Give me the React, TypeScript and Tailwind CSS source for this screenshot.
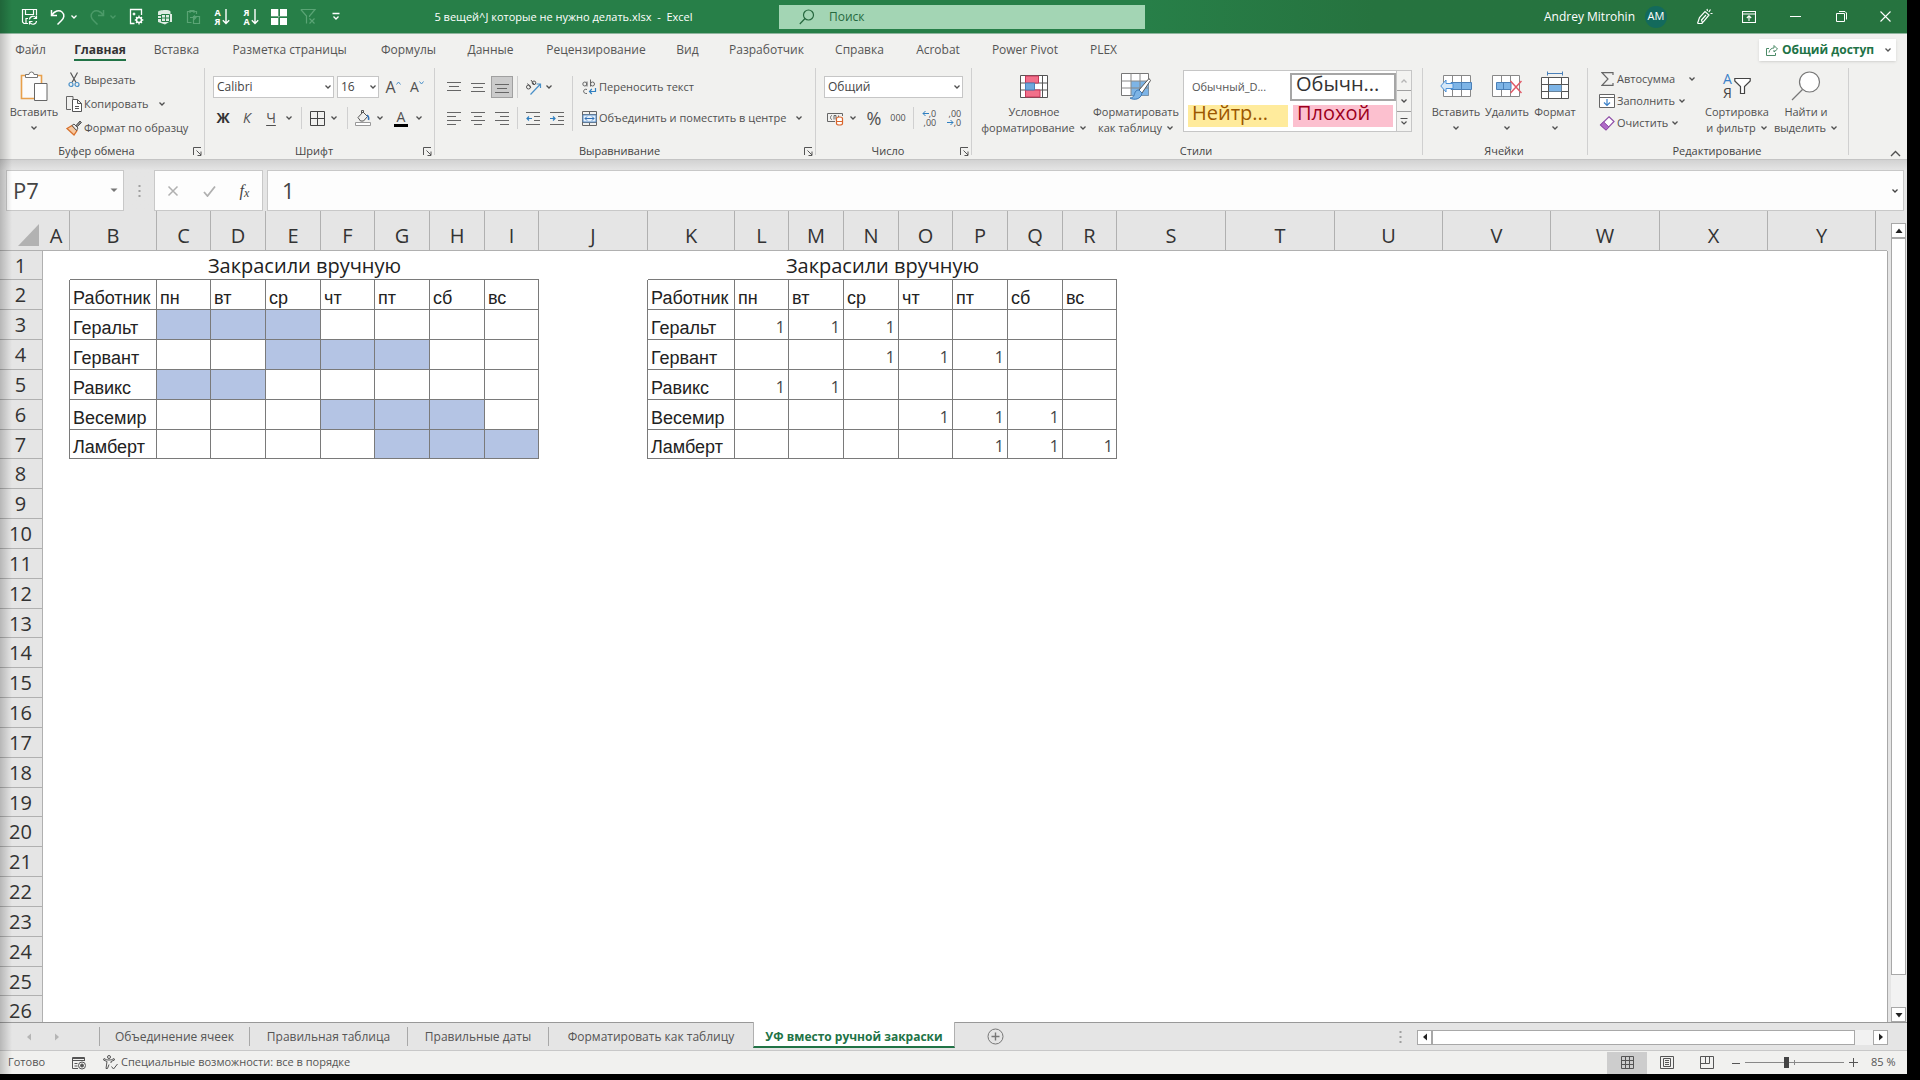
import React from 'react';

type Kids = { children?: React.ReactNode };

/* ---------- small drawing helpers ---------- */

function Svg({ w, h, children, vb, className = '' }: Kids & { w: number; h: number; vb?: string; className?: string }) {
  return (
    <svg
      width={w}
      height={h}
      viewBox={vb ?? `0 0 ${w} ${h}`}
      fill="none"
      stroke="currentColor"
      strokeWidth="1"
      className={`shrink-0 ${className}`}
      aria-hidden="true"
    >
      {children}
    </svg>
  );
}

function Chevron({ className = '' }: { className?: string }) {
  return (
    <Svg w={8} h={8} className={className}>
      <path d="M1.5 2.5 4 5l2.5-2.5" strokeWidth="1.3" />
    </Svg>
  );
}

function Launcher() {
  return (
    <button type="button" aria-label="Параметры группы" className="text-[#555]">
      <Svg w={9} h={9}>
        <path d="M.5 8V.5H8M3.5 3.5 8 8M8 4.5V8.500H4.500" />
      </Svg>
    </button>
  );
}

function Sep({ className = 'h-[22px]' }: { className?: string }) {
  return <div className={`w-px shrink-0 bg-[#d0d0d0] ${className}`} />;
}

function IconBtn({ label, className = 'w-6', children }: Kids & { label: string; className?: string }) {
  return (
    <button type="button" aria-label={label} className={`flex h-[22px] shrink-0 items-center justify-center ${className}`}>
      {children}
    </button>
  );
}

/* ---------- title bar ---------- */

function SaveIcon() {
  return (
    <Svg w={17} h={17}>
      <path d="M7 15.500H3L1.500 14V1.500H15.500V7M4.500 1.500V6.500H12.500V1.500M5 15.500V10.500H7" strokeWidth="1.2" />
      <path d="M8.500 11.500a3.500 3.500 0 0 1 6.500-1.500M15.500 7.500V10.500H12.500M15.500 13a3.500 3.500 0 0 1-6.500 1.500M8.500 16.500V13.500H11.500" strokeWidth="1.2" />
    </Svg>
  );
}

function UndoIcon({ flip = false }: { flip?: boolean }) {
  return (
    <Svg w={16} h={18} className={flip ? '-scale-x-100' : ''}>
      <path d="M1.500 2V7.500H7M1.800 7.200C4.500 3 9 1.500 12 4c3 2.600 2 6-.5 8.500L7.500 16.500" strokeWidth="1.5" />
    </Svg>
  );
}

function DocGearIcon() {
  return (
    <Svg w={15} h={17}>
      <path d="M5.500 15.500H1.500V1.500H12.500V7" strokeWidth="1.3" />
      <circle cx="5" cy="6" r="1" fill="currentColor" />
      <circle cx="10" cy="12" r="2.500" strokeWidth="1.5" />
      <path d="M10 7.500v1.800M10 14.700v1.800M5.800 12h1.700M12.500 12h1.800M7 9l1.200 1.200M11.800 13.800 13 15M13 9l-1.200 1.200M8.200 13.800 7 15" strokeWidth="1.3" />
    </Svg>
  );
}

function CubeTableIcon() {
  return (
    <Svg w={16} h={16}>
      <path d="M2 3C2 1 13 0 14.500 2.500V5H16v8h-3l-4 2.500L2 13z" fill="currentColor" fillOpacity=".85" stroke="none" />
      <path d="M5.500 5.500h8v7h-8zM5.500 9h8M9.500 5.500v7M2 6.500h3M2 9.500h3" stroke="#277f48" />
    </Svg>
  );
}

function ClipInsertIcon() {
  return (
    <Svg w={15} h={17}>
      <path d="M5.500 14.500H1.500V3.500H10.500V6M4 5V2.500H8V5" strokeWidth="1.200" />
      <path d="M7.500 8.500H13.500V15.500H7.500zM4 9.500h6M8 7.500l2 2-2 2" strokeWidth="1.200" />
    </Svg>
  );
}

function SortIcon({ top, bottom }: { top: string; bottom: string }) {
  return (
    <span className="flex items-center gap-px">
      <span className="flex flex-col text-[9px] leading-[9px] font-bold">
        <span>{top}</span>
        <span>{bottom}</span>
      </span>
      <Svg w={8} h={16}>
        <path d="M4 0V14.500M.800 11.300 4 14.500l3.200-3.200" strokeWidth="1.400" />
      </Svg>
    </span>
  );
}

function TitleBar() {
  return (
    <header className="grid h-[34px] shrink-0 grid-cols-[779fr_366fr_762fr] items-center border-b border-[#8fb59e] bg-[#277f48] text-[11px] text-white">
      <div className="flex items-center">
        <div className="flex w-[348px] shrink-0 items-center pl-[17px]">
          <IconBtn label="Сохранить"><SaveIcon /></IconBtn>
          <IconBtn label="Отменить" className="ml-[5px] w-6"><UndoIcon /></IconBtn>
          <IconBtn label="Список отмены" className="w-2"><Chevron /></IconBtn>
          <IconBtn label="Повторить" className="ml-[7px] w-6 text-[#4b9a68]"><UndoIcon flip /></IconBtn>
          <IconBtn label="Список повтора" className="w-2 text-[#4b9a68]"><Chevron /></IconBtn>
          <IconBtn label="Параметры документа" className="ml-[7px] w-6"><DocGearIcon /></IconBtn>
          <IconBtn label="Модель данных" className="ml-1 w-6"><CubeTableIcon /></IconBtn>
          <IconBtn label="Вставить значения" className="ml-[5px] w-6 text-[#5aa475]"><ClipInsertIcon /></IconBtn>
          <IconBtn label="Сортировка по возрастанию" className="ml-[5px] w-6"><SortIcon top="А" bottom="Я" /></IconBtn>
          <IconBtn label="Сортировка по убыванию" className="ml-[5px] w-6"><SortIcon top="Я" bottom="А" /></IconBtn>
          <IconBtn label="Все границы" className="ml-1 w-6">
            <Svg w={16} h={16}>
              <path d="M0 0h7v7H0zM9 0h7v7H9zM0 9h7v7H0zM9 9h7v7H9z" fill="currentColor" stroke="none" />
              <path d="M7.500 0v16M0 7.500h16" strokeOpacity=".3" />
            </Svg>
          </IconBtn>
          <IconBtn label="Снять фильтр" className="ml-[5px] w-6 text-[#5aa475]">
            <Svg w={17} h={17}>
              <path d="M.800 1.500H15L9.500 8v1M6.500 15.500V8L.800 1.500M9.500 10.500l5 5M14.500 10.500l-5 5" strokeWidth="1.200" />
            </Svg>
          </IconBtn>
          <IconBtn label="Настройка панели быстрого доступа" className="ml-1 w-6">
            <Svg w={8} h={9}>
              <path d="M.500 1.500h7M1.500 4.500 4 7l2.500-2.500" strokeWidth="1.300" />
            </Svg>
          </IconBtn>
        </div>
        <h1 className="flex-1 pt-px text-center whitespace-nowrap">5 вещей^J которые не нужно делать.xlsx&nbsp; -&nbsp; Excel</h1>
      </div>
      <label className="flex h-6 items-center bg-[#a3d5b4] pl-5 text-[#27693f]">
        <Svg w={16} h={16}>
          <circle cx="9.500" cy="6" r="5" strokeWidth="1.200" />
          <path d="M6 9.500.800 15" strokeWidth="1.200" />
        </Svg>
        <input
          type="search"
          aria-label="Поиск"
          placeholder="Поиск"
          className="ml-[14px] min-w-0 flex-1 bg-transparent text-xs outline-none placeholder:text-[#27693f]"
        />
      </label>
      <div className="flex h-full items-center justify-end bg-gradient-to-r from-[#277f48] to-[#26733f] to-30%">
        <span className="text-xs whitespace-nowrap">Andrey Mitrohin</span>
        <span className="ml-[10px] flex size-[22px] items-center justify-center rounded-full bg-[#136a5c]">AM</span>
        <IconBtn label="Скоро появится" className="ml-5 w-[34px]">
          <Svg w={17} h={17}>
            <path d="M1.500 15.500 3.500 9.500 9 3.500 13 7 7.500 13.500 6 15.500H1.500M6.500 15 5.500 12l4.500-5M11 1l.500 2M14.500 1.500 12.800 4M16.500 5.500h-2" strokeWidth="1.200" />
          </Svg>
        </IconBtn>
        <IconBtn label="Параметры отображения ленты" className="ml-[5px] w-[46px]">
          <Svg w={14} h={12}>
            <path d="M.500.500h13v11H.500zM.500 3h13M7 10V5M4.800 7 7 4.800 9.200 7" strokeWidth="1.100" />
          </Svg>
        </IconBtn>
        <IconBtn label="Свернуть" className="w-[46px]">
          <Svg w={11} h={3}><path d="M0 1.500h11" /></Svg>
        </IconBtn>
        <IconBtn label="Восстановить" className="w-[46px]">
          <Svg w={11} h={11}>
            <path d="M.500 2.500h8v8h-8zM3 .500h6L10.500 2v6.500" />
          </Svg>
        </IconBtn>
        <IconBtn label="Закрыть" className="w-[43px]">
          <Svg w={11} h={11}><path d="m.500.500 10 10M10.500.500l-10 10" strokeWidth="1.100" /></Svg>
        </IconBtn>
      </div>
    </header>
  );
}

/* ---------- ribbon tabs ---------- */

const tabs: [string, string][] = [
  ['Файл', 'w-[61px]'],
  ['Главная', 'w-[78px]'],
  ['Вставка', 'w-[75px]'],
  ['Разметка страницы', 'w-[151px]'],
  ['Формулы', 'w-[87px]'],
  ['Данные', 'w-[77px]'],
  ['Рецензирование', 'w-[134px]'],
  ['Вид', 'w-[49px]'],
  ['Разработчик', 'w-[109px]'],
  ['Справка', 'w-[77px]'],
  ['Acrobat', 'w-[80px]'],
  ['Power Pivot', 'w-[94px]'],
  ['PLEX', 'w-[63px]'],
];

function RibbonTabs() {
  return (
    <nav className="flex h-8 shrink-0 items-center text-xs text-[#555]">
      {tabs.map(([name, width]) => (
        <button key={name} type="button" className={`flex h-8 shrink-0 justify-center whitespace-nowrap ${width}`}>
          <span
            className={
              name === 'Главная'
                ? 'h-[27px] border-b-2 border-[#217346] leading-8 font-bold text-[#333]'
                : 'leading-8'
            }
          >
            {name}
          </span>
        </button>
      ))}
      <button
        type="button"
        className="mr-[11px] ml-auto flex h-[22px] w-[137px] items-center bg-white pl-[7px] font-bold text-[#217346] shadow-sm"
      >
        <Svg w={12} h={12} className="text-[#4b8a67]">
          <path d="M3 4.500H.500v7h9V9M3 8.500C3.500 5.500 5.500 4 8 4V1.500L11.500 5 8 8V6" />
        </Svg>
        <span className="ml-1 flex-1 text-left text-xs whitespace-nowrap">Общий доступ</span>
        <Chevron className="mr-1 text-[#555]" />
      </button>
    </nav>
  );
}

/* ---------- ribbon groups ---------- */

function Group({ title, width, launcher = false, children }: Kids & { title: string; width: string; launcher?: boolean }) {
  return (
    <>
      <section aria-label={title} className={`flex shrink-0 flex-col ${width}`}>
        <div className="flex h-[76px]">{children}</div>
        <div className="flex h-[14px] items-center pr-[2px] leading-[14px] text-[#444]">
          <span className="flex-1 text-center">{title}</span>
          {launcher && <Launcher />}
        </div>
      </section>
      <Sep className="h-[87px] bg-[#bdbdbd]" />
    </>
  );
}

function Combo({ label, value, className }: { label: string; value: string; className: string }) {
  return (
    <div className={`flex h-[22px] items-center border border-[#c6c6c6] bg-white pr-px ${className}`}>
      <select aria-label={label} defaultValue={value} className="min-w-0 flex-1 appearance-none bg-transparent pl-[3px] text-xs text-[#444] outline-none">
        <option>{value}</option>
      </select>
      <Chevron className="pointer-events-none" />
    </div>
  );
}

function BigBtn({ icon, lines, width, chevron }: { icon: React.ReactNode; lines: string[]; width: string; chevron: 'inline' | 'below' }) {
  return (
    <button type="button" className={`flex shrink-0 flex-col items-center pt-[2px] whitespace-nowrap ${width}`}>
      <span className="mb-[2px] flex h-8 items-center justify-center">{icon}</span>
      {lines.map((line, i) => (
        <span key={line} className="flex h-4 items-center gap-1 leading-4">
          {line}
          {chevron === 'inline' && i === lines.length - 1 && <Chevron />}
        </span>
      ))}
      {chevron === 'below' && <Chevron className="mt-1" />}
    </button>
  );
}

function RowBtn({ icon, text, className, iconBox = 'w-5', chevron }: { icon: React.ReactNode; text: string; className: string; iconBox?: string; chevron?: string }) {
  return (
    <button type="button" className={`flex items-center whitespace-nowrap ${className}`}>
      <span className={`flex shrink-0 items-center justify-center ${iconBox}`}>{icon}</span>
      {text}
      {chevron && <Chevron className={chevron} />}
    </button>
  );
}

function Lines({ d }: { d: string }) {
  return (
    <Svg w={14} h={14} className="text-[#666]">
      <path d={d} />
    </Svg>
  );
}

function ClipboardGroup() {
  return (
    <Group title="Буфер обмена" width="w-[204px]" launcher>
      <div className="flex pl-1">
        <BigBtn
          width="w-[60px]"
          lines={['Вставить']}
          chevron="below"
          icon={
            <Svg w={28} h={30}>
              <path d="M1.500 4.500h20v23h-20z" stroke="#e8a04c" strokeWidth="1.600" fill="#fbfbfb" />
              <path d="M5.500 6.500v-3H9a2.500 2.500 0 0 1 5 0h3.500v3z" fill="#fff" stroke="#777" />
              <path d="M14.500 12.500h12.500v17H14.500z" fill="#fff" stroke="#666" />
            </Svg>
          }
        />
        <div className="flex flex-col items-start">
          <RowBtn
            className="h-6"
            text="Вырезать"
            icon={
              <Svg w={12} h={16}>
                <path d="M2.500.500 8 10.500M9.500.500 4 10.500" stroke="#555" strokeWidth="1.200" />
                <circle cx="3" cy="12.500" r="2" stroke="#4a90c8" strokeWidth="1.200" />
                <circle cx="9" cy="12.500" r="2" stroke="#4a90c8" strokeWidth="1.200" />
              </Svg>
            }
          />
          <RowBtn
            className="h-6"
            text="Копировать"
            chevron="ml-[9px]"
            icon={
              <Svg w={16} h={16}>
                <path d="M5 13.500H.500V.500h6.500V3" stroke="#666" />
                <path d="M6.500 3.500h5l4 4v8h-9zM11.500 3.500v4h4M9 10.500h4M9 12.500h4" stroke="#555" fill="#fff" />
              </Svg>
            }
          />
          <RowBtn
            className="h-6"
            text="Формат по образцу"
            icon={
              <Svg w={16} h={16}>
                <path d="M1 8.500 6 5.500l5 5L8 15z" fill="#f6c9a0" stroke="#d9712c" strokeWidth="1.300" />
                <path d="m6 5.500 2-1.500 4 4-1.500 2.500z" fill="#eee" stroke="#555" />
                <path d="m10 5.500 4-4.500 1.500 1.500-4 4z" fill="#888" stroke="#555" />
              </Svg>
            }
          />
        </div>
      </div>
    </Group>
  );
}

function FontGroup() {
  return (
    <Group title="Шрифт" width="w-[229px]" launcher>
      <div className="flex flex-col pt-2">
        <div className="flex pl-2">
          <Combo label="Шрифт" value="Calibri" className="w-[121px]" />
          <Combo label="Размер шрифта" value="16" className="ml-[3px] w-[42px]" />
          <IconBtn label="Увеличить размер шрифта" className="ml-[2px] w-6">
            <span className="text-base">A</span>
            <Svg w={5} h={4} className="mb-2 text-[#4a90c8]"><path d="M.500 3.500 2.500 1l2 2.500" /></Svg>
          </IconBtn>
          <IconBtn label="Уменьшить размер шрифта">
            <span className="text-sm">A</span>
            <Svg w={5} h={4} className="mb-2 text-[#4a90c8]"><path d="M.500.500 2.500 3l2-2.500" /></Svg>
          </IconBtn>
        </div>
        <div className="mt-[9px] flex pl-[6px]">
          <IconBtn label="Полужирный"><span className="text-sm font-bold text-[#333]">Ж</span></IconBtn>
          <IconBtn label="Курсив"><span className="text-sm italic">К</span></IconBtn>
          <IconBtn label="Подчёркнутый"><span className="text-sm underline underline-offset-2">Ч</span></IconBtn>
          <IconBtn label="Вид подчёркивания" className="w-3"><Chevron /></IconBtn>
          <Sep className="ml-[6px] h-[22px]" />
          <IconBtn label="Границы" className="ml-[3px] w-6">
            <Svg w={15} h={15} className="text-[#444]"><path d="M.500.500h14v14h-14zM7.500.500v14M.500 7.500h14" /></Svg>
          </IconBtn>
          <IconBtn label="Виды границ" className="w-[10px]"><Chevron /></IconBtn>
          <Sep className="ml-2 h-[22px]" />
          <IconBtn label="Цвет заливки" className="ml-[3px] w-6">
            <Svg w={16} h={16}>
              <path d="M3 7.500 8 2l4.500 4.500-4 4.500H5.500zM6.500 3.500V.500h2V2" stroke="#555" />
              <path d="M12 5c1.500 1 2 3 1.500 5" stroke="#2f6fb5" strokeWidth="1.500" />
              <path d="M.500 12.500h15v3H.500z" stroke="#999" fill="#fff" />
            </Svg>
          </IconBtn>
          <IconBtn label="Выбор заливки" className="w-[10px]"><Chevron /></IconBtn>
          <IconBtn label="Цвет шрифта" className="ml-1 w-6">
            <span className="border-b-[3px] border-black px-[3px] text-sm leading-[14px]">A</span>
          </IconBtn>
          <IconBtn label="Выбор цвета шрифта" className="w-3"><Chevron /></IconBtn>
        </div>
      </div>
    </Group>
  );
}

function AlignGroup() {
  return (
    <Group title="Выравнивание" width="w-[380px]" launcher>
      <div className="flex w-[137px] shrink-0 flex-col pt-2 pl-[7px]">
        <div className="flex">
          <IconBtn label="По верхнему краю"><Lines d="M0 2.500h14M2 6.500h10M0 10.500h14" /></IconBtn>
          <IconBtn label="По середине"><Lines d="M0 3.500h14M2 7.500h10M0 11.500h14" /></IconBtn>
          <button type="button" aria-label="По нижнему краю" aria-pressed="true" className="mx-px flex h-[22px] w-[22px] items-center justify-center border border-[#a0a0a0] bg-[#cbcbcb]">
            <Lines d="M0 4.500h14M2 8.500h10M0 12.500h14" />
          </button>
          <Sep className="ml-[3px] h-[22px]" />
          <IconBtn label="Ориентация" className="ml-[3px] w-6">
            <Svg w={17} h={17}>
              <circle cx="3.500" cy="8" r="2" stroke="#555" />
              <path d="M2.500 4.500 6 9M6 1l3.500 5" stroke="#555" />
              <circle cx="9" cy="3.800" r="1.800" stroke="#555" />
              <path d="M5.500 15.500 15 5.500M15.500 9V5H11.500" stroke="#4a90c8" strokeWidth="1.200" />
            </Svg>
          </IconBtn>
          <IconBtn label="Виды ориентации" className="w-2"><Chevron /></IconBtn>
        </div>
        <div className="mt-[9px] flex">
          <IconBtn label="По левому краю"><Lines d="M0 1.500h14M0 5.500h9M0 9.500h14M0 13.500h9" /></IconBtn>
          <IconBtn label="По центру"><Lines d="M0 1.500h14M3 5.500h8M0 9.500h14M3 13.500h8" /></IconBtn>
          <IconBtn label="По правому краю"><Lines d="M0 1.500h14M5 5.500h9M0 9.500h14M5 13.500h9" /></IconBtn>
          <Sep className="ml-[3px] h-[22px]" />
          <IconBtn label="Уменьшить отступ" className="ml-[3px] w-6">
            <Svg w={14} h={14}>
              <path d="M0 1.500h14M8 5.500h6M8 9.500h6M0 13.500h14" stroke="#666" />
              <path d="M6 7.500H1M3 5.500l-2 2 2 2" stroke="#2f7fc0" strokeWidth="1.200" />
            </Svg>
          </IconBtn>
          <IconBtn label="Увеличить отступ">
            <Svg w={14} h={14}>
              <path d="M0 1.500h14M8 5.500h6M8 9.500h6M0 13.500h14" stroke="#666" />
              <path d="M0 7.500h5M3 5.500l2 2-2 2" stroke="#2f7fc0" strokeWidth="1.200" />
            </Svg>
          </IconBtn>
        </div>
      </div>
      <Sep className="mt-2 h-[55px]" />
      <div className="flex flex-col items-start pt-2 pl-[6px]">
        <RowBtn
          className="h-[22px]"
          text="Переносить текст"
          icon={
            <Svg w={15} h={16}>
              <circle cx="2.800" cy="5" r="2" stroke="#666" />
              <path d="M5 2.500V7.500M8.500.500V7.500" stroke="#666" />
              <circle cx="10.500" cy="5" r="2" stroke="#666" />
              <path d="M5 10.500c-4-1.500-5 4.500 0 4" stroke="#666" />
              <path d="M13.500 9v3.500H7.500M9.800 10l-2.300 2.500L9.800 15" stroke="#2f7fc0" strokeWidth="1.200" />
            </Svg>
          }
        />
        <RowBtn
          className="mt-[9px] h-[22px]"
          text="Объединить и поместить в центре"
          chevron="ml-[9px]"
          icon={
            <Svg w={15} h={15}>
              <path d="M.500.500h14v14h-14z" stroke="#666" />
              <path d="M.500 3.500h14M.500 11.500h14M7.500.500v3M7.500 11.500v3" stroke="#666" />
              <path d="M1 4h13v7H1z" fill="#e2eefa" stroke="#5a8fc8" />
              <path d="M3 7.500h9M5 5.500l-2 2 2 2M10 5.500l2 2-2 2" stroke="#2f6fb5" />
            </Svg>
          }
        />
      </div>
    </Group>
  );
}

function Decimals({ top, bottom, arrow }: { top: string; bottom: string; arrow: 'up' | 'down' }) {
  const mark = (
    <Svg w={7} h={7} className="text-[#2f7fc0]">
      <path d={arrow === 'up' ? 'M7 3.500H1M3.500 1 1 3.500 3.500 6' : 'M0 3.500h6M3.500 1 6 3.500 3.500 6'} />
    </Svg>
  );
  return (
    <span className="flex flex-col items-end text-[9px] leading-[9px]">
      <span className="flex items-center">{arrow === 'up' && mark}{top}</span>
      <span className="flex items-center">{arrow === 'down' && mark}{bottom}</span>
    </span>
  );
}

function NumberGroup() {
  return (
    <Group title="Число" width="w-[155px]" launcher>
      <div className="flex flex-col pt-2">
        <div className="flex pl-2">
          <Combo label="Числовой формат" value="Общий" className="w-[139px]" />
        </div>
        <div className="mt-[9px] flex pl-[7px]">
          <IconBtn label="Финансовый формат">
            <Svg w={17} h={15}>
              <path d="M8 10.500H.500v-8h15V5" stroke="#666" />
              <path d="M5 4.500C3 4.500 3 8.500 5 8.500M7 8.500v-4h2v4M11.500 4.500v2" stroke="#666" />
              <path d="M9.500 7.500c0-2 6-2 6 0v5c0 2-6 2-6 0zM9.500 10.500h6" fill="#fff" stroke="#d9652c" strokeWidth="1.200" />
            </Svg>
          </IconBtn>
          <IconBtn label="Виды финансового формата" className="w-3"><Chevron /></IconBtn>
          <IconBtn label="Процентный формат" className="w-[30px]"><span className="text-lg">%</span></IconBtn>
          <IconBtn label="Формат с разделителями" className="w-[18px]"><span className="text-[9px]">000</span></IconBtn>
          <Sep className="ml-[6px] h-[22px]" />
          <IconBtn label="Увеличить разрядность" className="ml-[3px] w-6"><Decimals top=",0" bottom=",00" arrow="up" /></IconBtn>
          <IconBtn label="Уменьшить разрядность" className="ml-px w-6"><Decimals top=",00" bottom=",0" arrow="down" /></IconBtn>
        </div>
      </div>
    </Group>
  );
}

function StylesGroup() {
  return (
    <Group title="Стили" width="w-[450px]">
      <div className="flex pl-[7px]">
        <BigBtn
          width="w-[110px]"
          lines={['Условное', 'форматирование']}
          chevron="inline"
          icon={
            <Svg w={28} h={23}>
              <path d="M.500.500h27v22H.500zM.500 8h27M.500 15h27M5.500.500v22M22.500.500v22M14 .500v22" fill="#fff" stroke="#555" />
              <path d="M5.500 1h13v7h-13zM5.500 15h14.500v7H5.500z" fill="#f2708a" stroke="#c8385a" />
              <path d="M5.500 8h9v7h-9z" fill="#6fa8dc" stroke="#4a80b8" />
            </Svg>
          }
        />
        <BigBtn
          width="w-[94px]"
          lines={['Форматировать', 'как таблицу']}
          chevron="inline"
          icon={
            <Svg w={30} h={28}>
              <path d="M.500 1.500h27v22H.500z" fill="#fff" stroke="#777" />
              <path d="M10 9h17.500v14.500H10z" fill="#7db4e6" stroke="none" />
              <path d="M.500 9h27M.500 16h27M10 1.500v22M19 1.500v22" stroke="#888" />
              <path d="M28 6.500 18 18l3 3 8.500-12.500z" fill="#fff" stroke="#555" />
              <path d="M18 18c-4 0-4 3-5 5.500-1 2-2.500 2.500-4 2.500 4 2.500 11 1.500 12-5z" fill="#7db4e6" stroke="#3a78b8" />
            </Svg>
          }
        />
        <div className="mt-[2px] flex h-[62px] w-[229px] border border-[#c6c6c6] bg-white">
          <div className="grid flex-1 grid-cols-[1fr_106px] grid-rows-[28px_28px] gap-x-[2px] pt-[2px] pl-1 text-xl leading-4 whitespace-nowrap">
            <button type="button" className="pl-1 text-left text-[11px] text-[#555]">Обычный_D...</button>
            <button type="button" className="border-2 border-[#a6a6a6] pb-[6px] pl-1 text-left text-[#333]">Обычн...</button>
            <button type="button" className="mt-1 mb-[2px] bg-[#ffeb9c] pb-[8px] pl-1 text-left text-[#9c5700]">Нейтр...</button>
            <button type="button" className="mx-[3px] mt-1 mb-[2px] bg-[#fcc0cf] pb-[8px] pl-1 text-left text-[#9c0020]">Плохой</button>
          </div>
          <div className="flex w-[15px] flex-col border-l border-[#c6c6c6] bg-[#f3f3f1]">
            <button type="button" aria-label="Прокрутить вверх" className="flex flex-1 items-center justify-center text-[#b5b5b5]"><Chevron className="rotate-180" /></button>
            <button type="button" aria-label="Прокрутить вниз" className="flex flex-1 items-center justify-center border-y border-[#a0a0a0]"><Chevron /></button>
            <button type="button" aria-label="Все стили" className="flex flex-1 items-center justify-center">
              <Svg w={8} h={9}><path d="M.500 1.500h7M1.500 4.500 4 7l2.500-2.500" strokeWidth="1.200" /></Svg>
            </button>
          </div>
        </div>
      </div>
    </Group>
  );
}

function CellsGroup() {
  return (
    <Group title="Ячейки" width="w-[164px]">
      <div className="flex pl-[7px]">
        <BigBtn
          width="w-[52px]"
          lines={['Вставить']}
          chevron="below"
          icon={
            <Svg w={32} h={24}>
              <path d="M3.500 1.500h27v21h-27zM12.500 1.500v21M21.500 1.500v21" fill="#fff" stroke="#888" />
              <path d="M11 8.500h20.500v7H11zM21.500 8.500v7" fill="#7db4e6" stroke="#4a80b8" />
              <path d="M13 9.500H6V6L.800 12 6 18v-3.500h7z" fill="#d6e8f8" stroke="#4a90d8" />
            </Svg>
          }
        />
        <BigBtn
          width="w-[50px]"
          lines={['Удалить']}
          chevron="below"
          icon={
            <Svg w={30} h={24}>
              <path d="M.500 1.500h27v21H.500zM9.500 1.500v21M18.500 1.500v21" fill="#fff" stroke="#888" />
              <path d="M4.500 8.500H19v7H4.500zM11.500 8.500v7" fill="#7db4e6" stroke="#4a80b8" />
              <path d="m18.500 7 11 12M29.500 7l-11 12" stroke="#e05a68" strokeWidth="1.500" />
            </Svg>
          }
        />
        <BigBtn
          width="w-[46px]"
          lines={['Формат']}
          chevron="below"
          icon={
            <Svg w={28} h={30}>
              <path d="M6.500 2.500h15M6.500.500v4M21.500.500v4" stroke="#4a80b8" />
              <path d="M.500 6.500h27v21H.500zM.500 13.500h27M.500 20.500h27M7.500 6.500v21M20.500 6.500v21" fill="#fff" stroke="#555" />
              <path d="M8 14h12.500v6.500H8z" fill="#7db4e6" stroke="none" />
            </Svg>
          }
        />
      </div>
    </Group>
  );
}

function EditGroup() {
  return (
    <Group title="Редактирование" width="w-[260px]">
      <div className="flex w-[112px] shrink-0 flex-col items-start pl-[9px]">
        <RowBtn
          className="h-[22px]"
          text="Автосумма"
          chevron="ml-[13px]"
          icon={<Svg w={13} h={14}><path d="M12 3V.700H1L7 7l-6 6.300h11V11" stroke="#666" strokeWidth="1.200" /></Svg>}
        />
        <RowBtn
          className="h-[22px]"
          text="Заполнить"
          chevron="ml-[3px]"
          icon={
            <Svg w={16} h={14}>
              <path d="M.500.500h15v13H.500zM.500 3.500h15" fill="#fff" stroke="#666" />
              <path d="M8 5v6.500M5 8.500l3 3 3-3" stroke="#3a80c8" strokeWidth="1.200" />
            </Svg>
          }
        />
        <RowBtn
          className="h-[22px]"
          text="Очистить"
          chevron="ml-[3px]"
          icon={
            <Svg w={16} h={15}>
              <path d="M10 .800 15 5.500 7 14 1.500 9z" fill="#fff" stroke="#9050a8" strokeWidth="1.200" />
              <path d="M4.500 5.800 10 11l-3 3L1.500 9z" fill="#b06ac8" stroke="#9050a8" />
            </Svg>
          }
        />
      </div>
      <BigBtn
        width="w-[74px]"
        lines={['Сортировка', 'и фильтр']}
        chevron="inline"
        icon={
          <span className="flex items-center gap-[2px]">
            <span className="flex flex-col text-sm leading-[14px]">
              <span className="text-[#3a80c8]">А</span>
              <span className="text-[#444]">Я</span>
            </span>
            <Svg w={17} h={18}><path d="M.800 1.500h15.400v2.500L10.500 9.500v7h-4v-7L.800 4z" fill="#fff" stroke="#444" strokeWidth="1.200" /></Svg>
          </span>
        }
      />
      <BigBtn
        width="w-[64px]"
        lines={['Найти и', 'выделить']}
        chevron="inline"
        icon={
          <Svg w={30} h={30}>
            <circle cx="18.500" cy="11" r="10" fill="#fff" stroke="#777" strokeWidth="1.200" />
            <path d="M11.500 18.500 1 29" stroke="#777" strokeWidth="1.300" />
          </Svg>
        }
      />
    </Group>
  );
}

function Ribbon() {
  return (
    <div className="flex h-[94px] shrink-0 border-b border-[#c4c4c4] pt-[2px] text-[11px] text-[#505050]">
      <ClipboardGroup />
      <FontGroup />
      <AlignGroup />
      <NumberGroup />
      <StylesGroup />
      <CellsGroup />
      <EditGroup />
      <button type="button" aria-label="Свернуть ленту" className="mr-[6px] mb-[2px] ml-auto self-end">
        <Svg w={11} h={7}><path d="m1 6 4.500-4.500L10 6" strokeWidth="1.400" /></Svg>
      </button>
    </div>
  );
}

/* ---------- formula bar ---------- */

function Dots() {
  return (
    <Svg w={3} h={12} className="text-[#a0a0a0]">
      <path d="M.500 0h2v2h-2zM.500 5h2v2h-2zM.500 10h2v2h-2z" fill="currentColor" stroke="none" />
    </Svg>
  );
}

function FormulaBar() {
  return (
    <div className="flex h-[51px] shrink-0 items-start bg-gradient-to-b from-[#d2d2d2] to-[#e5e5e5] to-20% pt-[10px] pr-[3px] pl-[6px] text-[22px] text-[#444]">
      <div className="flex h-[41px] w-[118px] shrink-0 items-center border border-[#c8c8c8] bg-[#fdfdfd] pr-[5px]">
        <input aria-label="Имя ячейки" defaultValue="P7" className="min-w-0 flex-1 bg-transparent pl-[6px] outline-none" />
        <Svg w={8} h={5}><path d="M.500.500h7L4 4z" fill="#777" stroke="none" /></Svg>
      </div>
      <div className="flex h-[41px] w-[30px] shrink-0 items-center justify-center"><Dots /></div>
      <div className="flex h-[41px] w-[109px] shrink-0 items-center border border-[#c8c8c8] bg-[#fdfdfd]">
        <IconBtn label="Отмена" className="w-[36px] text-[#b0b0b0]">
          <Svg w={12} h={12}><path d="m1.500 1.500 9 9M10.500 1.500l-9 9" strokeWidth="1.500" /></Svg>
        </IconBtn>
        <IconBtn label="Ввод" className="w-[36px] text-[#b0b0b0]">
          <Svg w={13} h={12}><path d="m1 7 3.500 4L12 1.500" strokeWidth="1.800" /></Svg>
        </IconBtn>
        <IconBtn label="Вставить функцию" className="w-[35px]">
          <span className="font-['Liberation_Serif',serif] text-base leading-4 italic">f</span>
          <span className="mt-1 font-['Liberation_Serif',serif] text-xs leading-3 italic">x</span>
        </IconBtn>
      </div>
      <div className="ml-1 flex h-[41px] flex-1 items-center border border-[#c8c8c8] bg-[#fdfdfd] pr-1">
        <input aria-label="Строка формул" defaultValue="1" className="min-w-0 flex-1 bg-transparent pl-[14px] outline-none" />
        <Chevron />
      </div>
    </div>
  );
}

/* ---------- worksheet ---------- */

const columns: [string, string][] = [
  ['A', 'w-[27px]'], ['B', 'w-[87px]'], ['C', 'w-[54px]'], ['D', 'w-[55px]'], ['E', 'w-[55px]'],
  ['F', 'w-[54px]'], ['G', 'w-[55px]'], ['H', 'w-[55px]'], ['I', 'w-[54px]'], ['J', 'w-[109px]'],
  ['K', 'w-[87px]'], ['L', 'w-[54px]'], ['M', 'w-[55px]'], ['N', 'w-[55px]'], ['O', 'w-[54px]'],
  ['P', 'w-[55px]'], ['Q', 'w-[55px]'], ['R', 'w-[54px]'], ['S', 'w-[109px]'], ['T', 'w-[109px]'],
  ['U', 'w-[108px]'], ['V', 'w-[108px]'], ['W', 'w-[109px]'], ['X', 'w-[108px]'], ['Y', 'w-[108px]'],
];

const days = ['пн', 'вт', 'ср', 'чт', 'пт', 'сб', 'вс'];

const workers: { name: string; from: number; to: number }[] = [
  { name: 'Геральт', from: 0, to: 2 },
  { name: 'Гервант', from: 2, to: 4 },
  { name: 'Равикс', from: 0, to: 1 },
  { name: 'Весемир', from: 3, to: 5 },
  { name: 'Ламберт', from: 4, to: 6 },
];

const edge = 'border-r border-b border-[#7a7a7a]';
const arial = "font-['Liberation_Sans',sans-serif] text-lg leading-[22px]";

function Title() {
  return (
    <td colSpan={8} className="border-b border-[#7a7a7a] text-center align-bottom text-xl leading-[26px]">
      Закрасили вручную
    </td>
  );
}

function HeadCells() {
  return (
    <>
      <td className={`${edge} ${arial} pl-[3px] align-bottom`}>Работник</td>
      {days.map((d) => (
        <td key={d} className={`${edge} ${arial} pl-[3px] align-bottom`}>{d}</td>
      ))}
    </>
  );
}

function WorkerCells({ index, numbers }: { index: number; numbers: boolean }) {
  const { name, from, to } = workers[index];
  return (
    <>
      <td className={`${edge} ${arial} pl-[3px] align-bottom`}>{name}</td>
      {days.map((d, i) => {
        const on = i >= from && i <= to;
        if (numbers) {
          return <td key={d} className={`${edge} pr-[3px] text-right align-bottom text-base leading-[24px] text-[#444]`}>{on ? '1' : ''}</td>;
        }
        return <td key={d} className={`${edge} ${on ? 'bg-[#b4c4e4]' : ''}`} />;
      })}
    </>
  );
}

function Sheet() {
  const gap = 'border-r border-[#7a7a7a]';
  return (
    <table className="w-full table-fixed border-separate border-spacing-0 text-[#222]">
      <colgroup>
        <col className="w-[43px]" />
        {columns.map(([c, w]) => (
          <col key={c} className={w} />
        ))}
        <col />
      </colgroup>
      <thead>
        <tr className="h-10 bg-[#e5e5e5] text-xl text-[#333]">
          <th aria-label="Выделить все" className="border-b border-[#b0b0b0] bg-[#e5e5e5] p-0">
            <Svg w={21} h={22} className="mt-2 ml-[18px]"><path d="M21 0v22H0z" fill="#b2b2b2" stroke="none" /></Svg>
          </th>
          {columns.map(([c]) => (
            <th key={c} className="border-r border-b border-[#b0b0b0] p-0 pt-[10px] leading-[26px] font-normal">{c}</th>
          ))}
          <th className="border-b border-[#b0b0b0] p-0" />
        </tr>
      </thead>
      <tbody>
        {Array.from({ length: 26 }, (_, r) => (
          <tr key={r} className={r % 6 === 0 ? 'h-[29px]' : 'h-[30px]'}>
            <th className="border-r border-b border-[#b0b0b0] bg-[#e5e5e5] p-0 pt-px pr-px text-xl leading-[26px] font-normal text-[#333]">{r + 1}</th>
            {r === 0 && (
              <>
                <td />
                <Title />
                <td />
                <Title />
                <td colSpan={8} />
              </>
            )}
            {r === 1 && (
              <>
                <td className={gap} />
                <HeadCells />
                <td className={gap} />
                <HeadCells />
                <td colSpan={8} />
              </>
            )}
            {r >= 2 && r <= 6 && (
              <>
                <td className={gap} />
                <WorkerCells index={r - 2} numbers={false} />
                <td className={gap} />
                <WorkerCells index={r - 2} numbers />
                <td colSpan={8} />
              </>
            )}
            {r > 6 && <td colSpan={26} />}
          </tr>
        ))}
      </tbody>
    </table>
  );
}

const arrows = {
  up: 'M4 1.500 7.500 6h-7z',
  down: 'M4 6.500.500 2h7z',
  left: 'M2 4 6 .500v7z',
  right: 'M6 4 2 .500v7z',
};

function ArrowBtn({ dir, label }: { dir: keyof typeof arrows; label: string }) {
  return (
    <button type="button" aria-label={label} className="flex size-[15px] shrink-0 items-center justify-center border border-[#a8a8a8] bg-white">
      <Svg w={8} h={8}><path d={arrows[dir]} fill="#222" stroke="none" /></Svg>
    </button>
  );
}

function Workspace() {
  return (
    <div className="flex min-h-0 flex-1 bg-[#e5e5e5]">
      <div className="min-w-0 flex-1 overflow-hidden bg-white">
        <Sheet />
      </div>
      <div className="flex w-1 shrink-0 pt-10">
        <div className="w-px bg-[#a8a8a8]" />
      </div>
      <div className="mr-px flex w-[15px] shrink-0 flex-col pt-3">
        <ArrowBtn dir="up" label="Прокрутить вверх" />
        <div className="flex min-h-0 flex-1 flex-col bg-[#f2f2f2] pb-8">
          <div className="flex-1 border border-[#a8a8a8] bg-white" />
        </div>
        <ArrowBtn dir="down" label="Прокрутить вниз" />
      </div>
    </div>
  );
}

/* ---------- sheet tabs and status bar ---------- */

const sheets: [string, string][] = [
  ['Объединение ячеек', 'w-[150px]'],
  ['Правильная таблица', 'w-[158px]'],
  ['Правильные даты', 'w-[141px]'],
  ['Форматировать как таблицу', 'w-[205px]'],
];

function SheetTabs() {
  return (
    <div className="flex h-7 shrink-0 items-start border-t border-[#999] bg-[#e5e5e5] text-xs text-[#555]">
      <div className="flex h-7 w-[99px] shrink-0 items-center gap-5 pl-[25px] text-[#b5b5b5]">
        <button type="button" aria-label="Предыдущий лист"><Svg w={8} h={8}><path d={arrows.left} fill="currentColor" stroke="none" /></Svg></button>
        <button type="button" aria-label="Следующий лист"><Svg w={8} h={8}><path d={arrows.right} fill="currentColor" stroke="none" /></Svg></button>
      </div>
      {sheets.map(([name, w]) => (
        <button key={name} type="button" className={`mt-1 h-[19px] shrink-0 border-l border-[#a8a8a8] leading-[19px] whitespace-nowrap ${w}`}>
          {name}
        </button>
      ))}
      <button type="button" className="-mt-px h-[26px] w-[202px] shrink-0 border-x border-b-2 border-x-[#b0b0b0] border-b-[#217346] bg-white pt-1 leading-[19px] font-bold whitespace-nowrap text-[#217346]">
        УФ вместо ручной закраски
      </button>
      <button type="button" aria-label="Новый лист" className="mt-[5px] ml-8 text-[#777]">
        <Svg w={17} h={17}><circle cx="8.500" cy="8.500" r="7.500" /><path d="M8.500 4.500v8M4.500 8.500h8" strokeWidth="1.400" /></Svg>
      </button>
      <div className="ml-auto flex h-7 items-center pr-[19px]">
        <Dots />
        <div className="ml-[15px] flex w-[471px]">
          <ArrowBtn dir="left" label="Прокрутить влево" />
          <div className="flex flex-1 bg-[#f2f2f2] pr-[18px]">
            <div className="h-[15px] flex-1 border border-[#a8a8a8] bg-white" />
          </div>
          <ArrowBtn dir="right" label="Прокрутить вправо" />
        </div>
      </div>
    </div>
  );
}

function StatusBar() {
  return (
    <footer className="flex h-6 shrink-0 items-center border-t border-[#c8c8c8] bg-[#f1f1ef] text-[11px] text-[#555]">
      <span className="w-[63px] pl-2">Готово</span>
      <Svg w={16} h={14} className="ml-2">
        <path d="M7 12.500H1.500V1.500h12V5M1.500 4.500h12M3.500 7.500h3M3.500 10h3M1.500 2.500h12" />
        <circle cx="11" cy="9.500" r="3.500" />
        <circle cx="11" cy="9.500" r="1.500" fill="currentColor" />
      </Svg>
      <button type="button" className="ml-4 flex items-center gap-[3px] whitespace-nowrap">
        <Svg w={15} h={15}>
          <circle cx="6" cy="2" r="1.500" />
          <path d="M1 3.500c3 2 7 2 10 0l.500 1.500L8 6.500V8M4 6.500.500 5 1 3.500M4 6.500 3 13.500h1.500L6 9.500M8.500 11.500l2 2.500 4-5" />
        </Svg>
        Специальные возможности: все в порядке
      </button>
      <div className="ml-auto flex h-[22px] items-center">
        <IconBtn label="Обычный" className="w-10 bg-[#cdcdcd]">
          <Svg w={13} h={13}><path d="M.500.500h12v12H.500zM.500 4.500h12M.500 8.500h12M4.500.500v12M8.500.500v12" /></Svg>
        </IconBtn>
        <IconBtn label="Разметка страницы" className="w-10">
          <Svg w={14} h={13}><path d="M.500.500h13v12H.500zM3.500 2.500h7v8h-7zM5 4.500h4M5 6.500h4M5 8.500h4" /></Svg>
        </IconBtn>
        <IconBtn label="Страничный режим" className="w-10">
          <Svg w={14} h={13}><path d="M.500.500h13v12H.500zM5.500.500v7M9.500.500v7M.500 7.500h9" /></Svg>
        </IconBtn>
        <IconBtn label="Уменьшить масштаб" className="ml-[2px] w-[14px]">
          <Svg w={8} h={8}><path d="M0 4.500h8" /></Svg>
        </IconBtn>
        <input
          type="range"
          aria-label="Масштаб"
          min={10}
          max={190}
          defaultValue={85}
          className="ml-[2px] h-[11px] w-[99px] appearance-none bg-[linear-gradient(#888,#888),linear-gradient(#888,#888)] bg-[length:100%_1px,1px_5px] bg-center bg-no-repeat [&::-webkit-slider-thumb]:h-[11px] [&::-webkit-slider-thumb]:w-[5px] [&::-webkit-slider-thumb]:appearance-none [&::-webkit-slider-thumb]:bg-[#444]"
        />
        <IconBtn label="Увеличить масштаб" className="ml-[2px] w-[14px]">
          <Svg w={9} h={9}><path d="M0 4.500h9M4.500 0v9" /></Svg>
        </IconBtn>
        <span className="w-[47px] pl-[11px] whitespace-nowrap">85 %</span>
      </div>
    </footer>
  );
}

export default function App() {
  return (
    <div className="h-screen overflow-hidden bg-black pr-[13px] pb-[6px] font-['Open_Sans',sans-serif]">
      <div className="relative flex h-full flex-col overflow-hidden bg-[#f1f1ef]">
        <TitleBar />
        <RibbonTabs />
        <Ribbon />
        <FormulaBar />
        <Workspace />
        <SheetTabs />
        <StatusBar />
        <div className="pointer-events-none absolute inset-y-0 left-0 w-3 bg-gradient-to-r from-black/20 to-transparent" />
      </div>
    </div>
  );
}
